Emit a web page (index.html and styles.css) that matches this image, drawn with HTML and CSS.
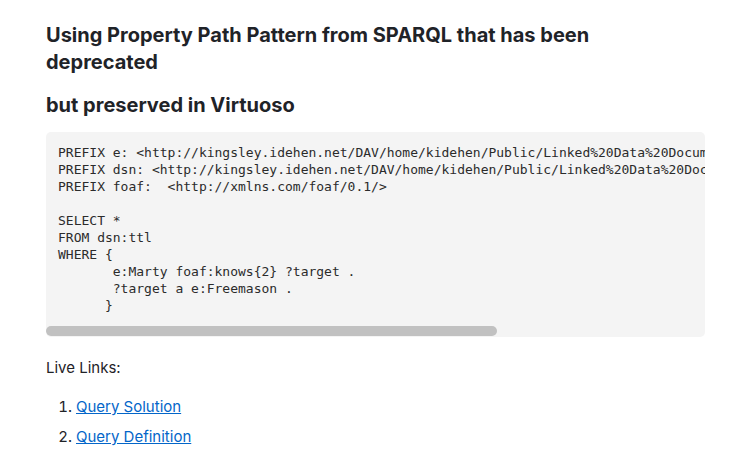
FILE: index.html
```html
<!DOCTYPE html>
<html>
<head>
<meta charset="utf-8">
<link rel="stylesheet" href="styles.css">
</head>
<body>
<main class="doc">
<h3 class="title">Using Property Path Pattern from SPARQL that has been deprecated</h3>
<h3 class="title title-last">but preserved in Virtuoso</h3>
<div class="code-box">
<pre class="code">PREFIX e: &lt;http://kingsley.idehen.net/DAV/home/kidehen/Public/Linked%20Data%20Documents/Tutorials/club-membership.ttl#&gt;
PREFIX dsn: &lt;http://kingsley.idehen.net/DAV/home/kidehen/Public/Linked%20Data%20Documents/Tutorials/club-membership.ttl&gt;
PREFIX foaf:  &lt;http://xmlns.com/foaf/0.1/&gt;

SELECT *
FROM dsn:ttl
WHERE {
       e:Marty foaf:knows{2} ?target .
       ?target a e:Freemason .
      }</pre>
<div class="scroll-track"><div class="scroll-thumb"></div></div>
</div>
<p class="para">Live Links:</p>
<ol class="links">
<li><a href="#">Query Solution</a></li>
<li><a href="#">Query Definition</a></li>
</ol>
</main>
</body>
</html>
```
FILE: styles.css
```css
html, body {
  margin: 0;
  padding: 0;
  background: #ffffff;
}
body {
  font-family: Inter, "Noto Sans", sans-serif;
  color: #1f2328;
}
.doc {
  padding: 22px 31px 0 46px;
}
.title {
  font-size: 20px;
  font-weight: 700;
  line-height: 27px;
  margin: 0 0 16px 0;
  max-width: 640px;
}
.title-last {
  margin-bottom: 13px;
}
.code-box {
  background: #f4f4f4;
  border-radius: 5px;
  overflow: hidden;
}
.code {
  margin: 0;
  padding: 12px 12px 12px 12px;
  font-family: "DejaVu Sans Mono", monospace;
  font-size: 13px;
  line-height: 17px;
  color: #2b2b2b;
  white-space: pre;
  overflow: hidden;
}
.scroll-track {
  height: 11px;
  display: flex;
  align-items: flex-start;
}
.scroll-thumb {
  width: 451px;
  height: 10px;
  background: #c1c1c1;
  border-radius: 5px;
}
.para {
  font-size: 15px;
  line-height: 22px;
  margin: 20px 0 17px 0;
}
.links {
  margin: 0;
  padding-left: 30px;
  font-size: 15px;
  line-height: 22px;
}
.links li {
  margin-bottom: 8px;
}
.links a {
  color: #0366c9;
  text-decoration: underline;
}
```
